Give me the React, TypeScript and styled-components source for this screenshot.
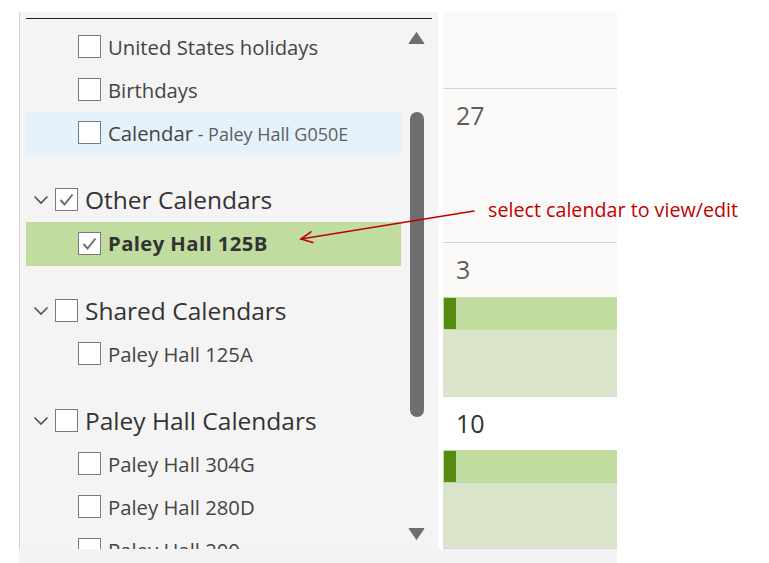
import React from 'react';
import styled, { createGlobalStyle } from 'styled-components';

const Global = createGlobalStyle`
  *, *::before, *::after { box-sizing: border-box; }
  html, body { margin: 0; padding: 0; background: #ffffff; }
  body { font-family: "Open Sans", "Noto Sans", sans-serif; }
`;

const Frame = styled.div`
  position: relative;
  margin: 12px 0 0 19px;
  width: 598px;
  height: 551px;
  display: grid;
  grid-template-columns: 419px 174px;
  grid-template-rows: 537px 14px;
  column-gap: 5px;
`;

const Panel = styled.div`
  border-left: 1px solid #d2d2d2;
  background: #f4f4f4;
  padding: 6px 6px 0 6px;
  overflow: hidden;
`;

const PanelInner = styled.div`
  height: 100%;
  border-top: 1px solid #222222;
  display: grid;
  grid-template-columns: 375px 1fr;
`;

const List = styled.div`
  padding-top: 7px;
  overflow: hidden;
`;

const ItemRow = styled.div<{ $bg?: string; $tall?: boolean }>`
  height: ${(p) => (p.$tall ? '44px' : '43px')};
  display: flex;
  align-items: center;
  gap: 7px;
  padding: 0 0 2px 52px;
  background: ${(p) => p.$bg ?? 'transparent'};
  white-space: nowrap;
`;

const ItemText = styled.span<{ $bold?: boolean }>`
  font-size: 20.3px;
  font-weight: ${(p) => (p.$bold ? 700 : 400)};
  color: ${(p) => (p.$bold ? '#333333' : '#444444')};
  letter-spacing: ${(p) => (p.$bold ? '0.4px' : '0')};
`;

const SubText = styled.span`
  font-size: 18px;
  letter-spacing: 0;
  color: #605e5c;
`;

const Group = styled.div`
  margin-top: 23px;
`;

const HeaderRow = styled.div`
  height: 44px;
  display: flex;
  align-items: center;
  padding: 0 0 1px 7px;
  white-space: nowrap;
`;

const Chevron = styled.svg`
  width: 16px;
  height: 10px;
  margin-right: 6px;
  flex: none;
`;

const HeaderText = styled.span`
  font-size: 24.5px;
  color: #333333;
  margin-left: 7px;
`;

const Box = styled.span`
  width: 23px;
  height: 23px;
  flex: none;
  border: 1px solid #7a7a7a;
  background: #ffffff;
  display: flex;
  align-items: center;
  justify-content: center;
`;

const ScrollCol = styled.div`
  display: flex;
  flex-direction: column;
  align-items: center;
  padding: 13px 0 9px 0;
`;

const Arrow = styled.svg`
  width: 17px;
  height: 12px;
  flex: none;
`;

const Thumb = styled.div`
  width: 14px;
  height: 305px;
  margin-top: 68px;
  border-radius: 7px;
  background: #6e6e6e;
  flex: none;
`;

const Spacer = styled.div`
  flex: 1;
`;

const CalendarCol = styled.div`
  display: grid;
  grid-template-rows: 77px 154px 154px 152px;
`;

const WeekCell = styled.div<{ $bg: string; $numH: number }>`
  background: ${(p) => p.$bg};
  border-bottom: 1px solid #d8d6d4;
  display: grid;
  grid-template-rows: ${(p) => `${p.$numH}px 33px 1fr`};
  overflow: hidden;
`;

const DayNum = styled.div<{ $dark?: boolean }>`
  padding: 9px 0 0 13px;
  font-size: 25px;
  line-height: 34px;
  color: ${(p) => (p.$dark ? '#323130' : '#605e5c')};
`;

const EventBar = styled.div`
  background: #c0dc9f;
  display: flex;
`;

const EventStripe = styled.div`
  width: 12px;
  margin: 1px 0 1px 1px;
  background: #558b13;
`;

const SelectedArea = styled.div`
  background: #d9e4ca;
`;

const BottomStrip = styled.div`
  grid-column: 1 / -1;
  background: #f3f3f3;
`;

const Note = styled.div`
  position: absolute;
  left: 469px;
  top: 185px;
  font-size: 19.7px;
  line-height: 26px;
  color: #c00000;
  white-space: nowrap;
`;

const Overlay = styled.svg`
  position: absolute;
  left: 0;
  top: 0;
  width: 598px;
  height: 551px;
  pointer-events: none;
`;

const Check = () => (
  <svg width="19" height="19" viewBox="0 0 19 19">
    <polyline points="3.5,10 7.5,14.5 15.5,4.5" fill="none" stroke="#6e6e6e" strokeWidth="2" />
  </svg>
);

const CheckBox = ({ checked }: { checked?: boolean }) => <Box>{checked ? <Check /> : null}</Box>;

type Item = { label: string; sub?: string; checked?: boolean; bg?: string; bold?: boolean };
type GroupData = { title: string; checked?: boolean; items: Item[] };

const topItems: Item[] = [
  { label: 'United States holidays' },
  { label: 'Birthdays' },
  { label: 'Calendar', sub: ' - Paley Hall G050E', bg: '#e5f1fb' },
];

const groups: GroupData[] = [
  { title: 'Other Calendars', checked: true, items: [{ label: 'Paley Hall 125B', checked: true, bold: true, bg: '#c0dc9f' }] },
  { title: 'Shared Calendars', items: [{ label: 'Paley Hall 125A' }] },
  {
    title: 'Paley Hall Calendars',
    items: [{ label: 'Paley Hall 304G' }, { label: 'Paley Hall 280D' }, { label: 'Paley Hall 200' }],
  },
];

const ItemView = ({ item }: { item: Item }) => (
  <ItemRow $bg={item.bg} $tall={item.bold}>
    <CheckBox checked={item.checked} />
    <ItemText $bold={item.bold}>
      {item.label}
      {item.sub ? <SubText>{item.sub}</SubText> : null}
    </ItemText>
  </ItemRow>
);

export default function App() {
  return (
    <>
      <Global />
      <Frame>
        <Panel>
          <PanelInner>
            <List>
              {topItems.map((it) => (
                <ItemView key={it.label} item={it} />
              ))}
              {groups.map((g) => (
                <Group key={g.title}>
                  <HeaderRow>
                    <Chevron viewBox="0 0 16 10">
                      <polyline points="1.5,1.5 8,8 14.5,1.5" fill="none" stroke="#555555" strokeWidth="1.7" />
                    </Chevron>
                    <CheckBox checked={g.checked} />
                    <HeaderText>{g.title}</HeaderText>
                  </HeaderRow>
                  {g.items.map((it) => (
                    <ItemView key={it.label} item={it} />
                  ))}
                </Group>
              ))}
            </List>
            <ScrollCol>
              <Arrow viewBox="0 0 17 12">
                <polygon points="1,11.5 8.5,0.5 16,11.5" fill="#6e6e6e" stroke="#6e6e6e" strokeLinejoin="round" strokeWidth="1" />
              </Arrow>
              <Thumb />
              <Spacer />
              <Arrow viewBox="0 0 17 12">
                <polygon points="1,0.5 16,0.5 8.5,11.5" fill="#6e6e6e" stroke="#6e6e6e" strokeLinejoin="round" strokeWidth="1" />
              </Arrow>
            </ScrollCol>
          </PanelInner>
        </Panel>
        <CalendarCol>
          <WeekCell $bg="#faf9f8" $numH={76} />
          <WeekCell $bg="#faf9f8" $numH={153}>
            <DayNum>27</DayNum>
          </WeekCell>
          <WeekCell $bg="#faf9f8" $numH={54}>
            <DayNum>3</DayNum>
            <EventBar>
              <EventStripe />
            </EventBar>
            <SelectedArea />
          </WeekCell>
          <WeekCell $bg="#ffffff" $numH={53}>
            <DayNum $dark>10</DayNum>
            <EventBar>
              <EventStripe />
            </EventBar>
            <SelectedArea />
          </WeekCell>
        </CalendarCol>
        <BottomStrip />
        <Note>select calendar to view/edit</Note>
        <Overlay viewBox="0 0 598 551">
          <g stroke="#c00000" strokeWidth="1.6" fill="none" strokeLinecap="round">
            <line x1="455" y1="199" x2="282" y2="227" />
            <polyline points="292,219.8 282,227 293.8,230.6" />
          </g>
        </Overlay>
      </Frame>
    </>
  );
}
